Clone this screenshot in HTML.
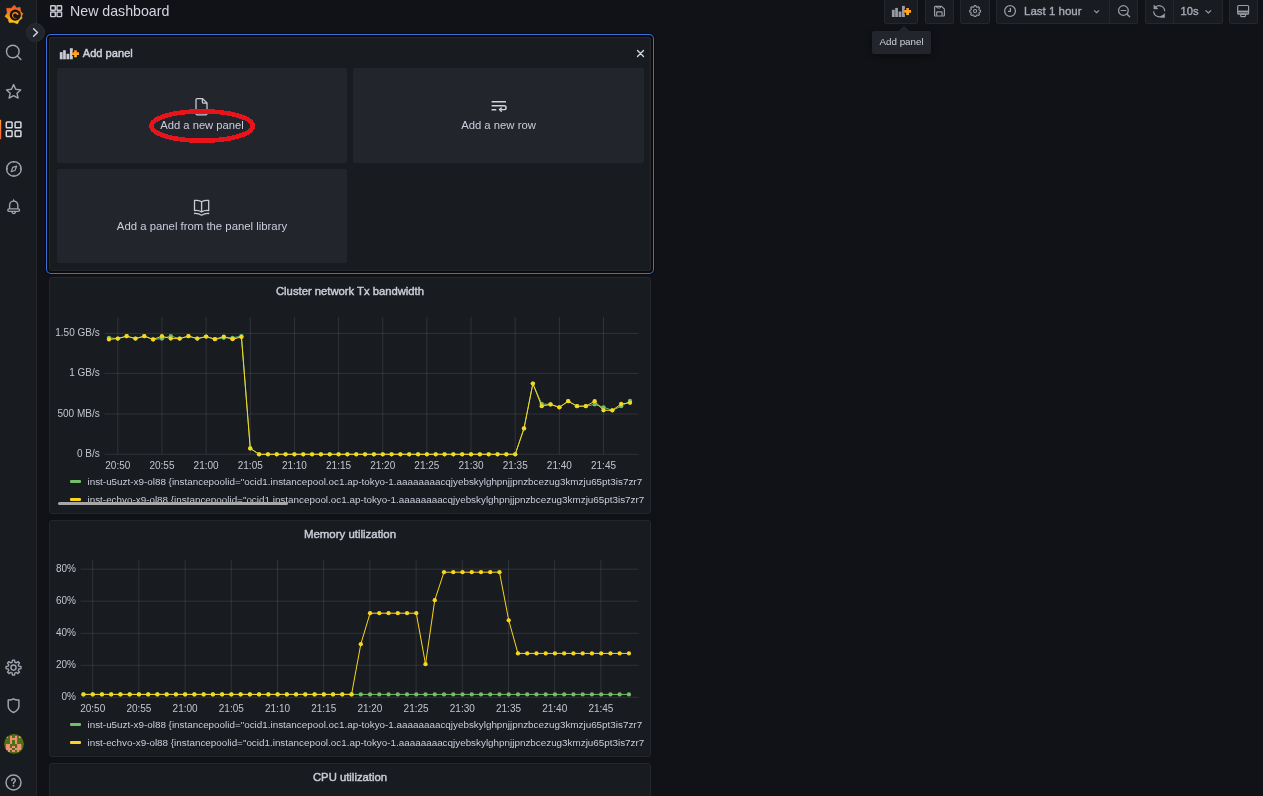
<!DOCTYPE html>
<html><head><meta charset="utf-8">
<style>
*{box-sizing:border-box;margin:0;padding:0}
html,body{width:1263px;height:796px;overflow:hidden;background:#111217;font-family:"Liberation Sans",sans-serif;color:#ccccdc}
.abs{position:absolute}
#side{position:absolute;left:0;top:0;width:37px;height:796px;background:#181b1f;border-right:1px solid #25272d}
.si{position:absolute;left:0;width:28px;height:24px}
.btn{position:absolute;top:-9px;height:33px;background:#181b1f;border:1px solid #25272c;border-radius:2px}
.panel{position:absolute;left:49px;width:602px;background:#181b1f;border:1px solid #24262c;border-radius:3px;overflow:hidden}
.ptitle{position:absolute;left:0;right:0;top:7.3px;text-align:center;font-size:11.25px;font-weight:400;color:#c9cad6;-webkit-text-stroke:0.45px #c9cad6;line-height:12px}
.card{position:absolute;background:#22252b;border-radius:2px}
.ctext{position:absolute;left:0;right:0;text-align:center;font-size:11.2px;color:#ccccdc;line-height:13px}
.yl{position:absolute;font-size:10px;line-height:12px;text-align:right;white-space:nowrap;color:#c4c4cf}
.xl{position:absolute;width:40px;font-size:10px;line-height:12px;text-align:center;white-space:nowrap;color:#c4c4cf}
.sw{position:absolute;left:70px;width:11px;height:3px;border-radius:1px}
.lg{position:absolute;left:87.5px;font-size:9.87px;line-height:12px;white-space:nowrap;color:#ccccdc;width:557px;overflow:hidden}
svg{position:absolute;left:0;top:0;overflow:visible}
</style></head>
<body><div id="root" style="position:absolute;left:0;top:0;width:1263px;height:796px;will-change:transform">
<!-- sidebar -->
<div id="side">
  <!-- logo -->
  <svg width="37" height="30" viewBox="0 0 37 30">
    <defs><linearGradient id="lg1" x1="0" y1="0" x2="0" y2="1">
      <stop offset="0" stop-color="#f05028"/><stop offset="0.45" stop-color="#f58220"/><stop offset="1" stop-color="#fcd20a"/></linearGradient></defs>
    <path fill="url(#lg1)" stroke="url(#lg1)" stroke-width="0.6" stroke-linejoin="round" d="M14.30 5.00 L16.60 8.07 L20.05 7.30 L20.56 11.25 L22.90 13.70 L21.54 15.91 L22.10 18.30 L19.33 20.29 L17.50 23.80 L13.37 22.24 L9.20 22.40 L8.11 18.86 L4.90 16.40 L7.29 12.95 L6.60 8.30 L11.27 8.36 Z"/>
    <circle cx="15.3" cy="15.1" r="5.6" fill="#14161a"/>
    <path d="M20.9 13.2 A5.5 5.5 0 0 0 16 9.5" fill="none" stroke="url(#lg1)" stroke-width="0.01"/>
    <path d="M18.65 14.71 L18.54 14.28 L18.37 13.87 L18.15 13.48 L17.89 13.13 L17.58 12.81 L17.23 12.54 L16.85 12.32 L16.45 12.14 L16.03 12.02 L15.59 11.96 L15.15 11.96 L14.72 12.01 L14.30 12.12 L13.89 12.28 L13.51 12.50 L13.17 12.76 L12.86 13.06 L12.59 13.40 L12.37 13.77 L12.20 14.17 L12.08 14.59 L12.02 15.01 L12.02 15.44 L12.07 15.87 L12.18 16.28 L12.34 16.68 L12.55 17.05 L12.80 17.40 L13.10 17.70 L13.44 17.96 L13.80 18.18 L14.19 18.34 L14.60 18.46 L15.02 18.52 L15.44 18.52 L15.86 18.47 L16.27 18.37 L16.66 18.21 L17.02 18.00 L17.36 17.75 L17.29 17.67 L16.93 17.86 L16.56 18.00 L16.18 18.09 L15.80 18.12 L15.42 18.11 L15.06 18.05 L14.72 17.94 L14.39 17.79 L14.10 17.60 L13.84 17.39 L13.61 17.14 L13.42 16.87 L13.28 16.59 L13.17 16.29 L13.10 15.99 L13.07 15.69 L13.08 15.40 L13.13 15.11 L13.22 14.84 L13.33 14.58 L13.48 14.35 L13.65 14.14 L13.84 13.96 L14.05 13.81 L14.27 13.69 L14.51 13.60 L14.74 13.54 L14.98 13.51 L15.22 13.51 L15.45 13.54 L15.68 13.60 L15.89 13.69 L16.08 13.80 L16.26 13.93 L16.42 14.08 L16.55 14.25 L16.67 14.43 L16.76 14.62 L16.83 14.82 L16.88 15.02 Z" fill="#f58a1f"/>
  </svg>
</div>
<!-- sidebar border highlight -->
<svg width="1263" height="796" style="pointer-events:none">
  <!-- search -->
  <circle cx="12.8" cy="51.5" r="6.3" fill="none" stroke="#a2a3b0" stroke-width="1.4"/>
  <line x1="17.3" y1="56" x2="20.9" y2="59.6" stroke="#a2a3b0" stroke-width="1.4" stroke-linecap="round"/>
  <!-- star -->
  <path d="M13.6 84.6 L15.7 89.3 L20.7 89.9 L17 93.2 L18.1 98.1 L13.6 95.6 L9.1 98.1 L10.2 93.2 L6.5 89.9 L11.5 89.3 Z" fill="none" stroke="#a2a3b0" stroke-width="1.4" stroke-linejoin="round"/>
  <!-- active bar -->
  <defs><linearGradient id="lg2" x1="0" y1="0" x2="0" y2="1"><stop offset="0" stop-color="#ff9830"/><stop offset="1" stop-color="#f55f3e"/></linearGradient></defs>
  <rect x="0" y="119.8" width="1.2" height="19.4" fill="url(#lg2)"/>
  <!-- dashboards -->
  <g fill="none" stroke="#d8d9e4" stroke-width="1.5">
    <rect x="6.3" y="122" width="5.8" height="5.8" rx="0.8"/><rect x="15.1" y="122" width="5.8" height="5.8" rx="0.8"/>
    <rect x="6.3" y="130.8" width="5.8" height="5.8" rx="0.8"/><rect x="15.1" y="130.8" width="5.8" height="5.8" rx="0.8"/>
  </g>
  <!-- compass -->
  <circle cx="13.9" cy="168.9" r="7.3" fill="none" stroke="#a2a3b0" stroke-width="1.4"/>
  <path d="M16.6 166.2 L15 170.5 L11.2 171.6 L12.8 167.3 Z" fill="none" stroke="#a2a3b0" stroke-width="1.2" stroke-linejoin="round"/>
  <path d="M13.9 161.6 L13.9 163 M13.9 174.8 L13.9 176.2 M6.6 168.9 L8 168.9 M19.8 168.9 L21.2 168.9" stroke="#a2a3b0" stroke-width="1.1"/>
  <!-- bell -->
  <path d="M9.6 208.7 L9.6 205.2 A4.1 4.1 0 0 1 17.8 205.2 L17.8 208.7" fill="none" stroke="#a2a3b0" stroke-width="1.4"/>
  <rect x="7.8" y="208.9" width="11.7" height="2.5" rx="1.1" fill="none" stroke="#a2a3b0" stroke-width="1.35"/>
  <path d="M11.9 211.8 A1.8 1.8 0 0 0 15.5 211.8" fill="none" stroke="#a2a3b0" stroke-width="1.35"/>
  <path d="M12.7 201.2 L13.7 198.6 L14.7 201.2 Z" fill="#a2a3b0"/>
  <!-- cog -->
  <path d="M12.08 662.29 L12.46 660.17 L14.54 660.17 L14.92 662.29 L15.60 662.52 L16.25 662.84 L18.01 661.61 L19.49 663.09 L18.26 664.85 L18.58 665.50 L18.81 666.18 L20.93 666.56 L20.93 668.64 L18.81 669.02 L18.58 669.70 L18.26 670.35 L19.49 672.11 L18.01 673.59 L16.25 672.36 L15.60 672.68 L14.92 672.91 L14.54 675.03 L12.46 675.03 L12.08 672.91 L11.40 672.68 L10.75 672.36 L8.99 673.59 L7.51 672.11 L8.74 670.35 L8.42 669.70 L8.19 669.02 L6.07 668.64 L6.07 666.56 L8.19 666.18 L8.42 665.50 L8.74 664.85 L7.51 663.09 L8.99 661.61 L10.75 662.84 L11.40 662.52 Z" fill="none" stroke="#a2a3b0" stroke-width="1.4" stroke-linejoin="round"/>
  <circle cx="13.5" cy="667.6" r="2.6" fill="none" stroke="#a2a3b0" stroke-width="1.4"/>
  <!-- shield -->
  <path d="M13.5 698.8 Q15.8 700.2 18.9 699.9 L18.9 706.2 C18.9 709.2 16.6 711 13.5 712.5 C10.4 711 8.2 709.2 8.2 706.2 L8.2 699.9 Q11.2 700.2 13.5 698.8 Z" fill="none" stroke="#a2a3b0" stroke-width="1.45" stroke-linejoin="round"/>
  <!-- avatar -->
  <defs><clipPath id="avc"><circle cx="14" cy="743.9" r="9.9"/></clipPath></defs>
  <circle cx="14" cy="743.9" r="9.9" fill="#4f720f"/>
  <g fill="#f08b80" clip-path="url(#avc)">
    <rect x="10" y="735.9" width="2" height="8.1"/><rect x="15" y="735.9" width="2.1" height="8.1"/><rect x="10" y="738" width="7.1" height="2"/>
    <rect x="5.9" y="735.9" width="2.1" height="2.1"/><rect x="18.9" y="735.9" width="2.4" height="2.1"/>
    <rect x="5.9" y="744" width="4.1" height="6"/><rect x="8" y="750" width="2" height="2"/>
    <rect x="17.1" y="744" width="4.2" height="6"/><rect x="17.1" y="750" width="1.8" height="2"/>
    <rect x="12" y="746" width="3" height="2"/><rect x="10" y="748" width="2" height="2"/><rect x="15" y="748" width="2.1" height="2"/>
    <rect x="12" y="750" width="3" height="2"/>
  </g>
  <!-- help -->
  <circle cx="13.5" cy="782.5" r="7.5" fill="none" stroke="#a2a3b0" stroke-width="1.45"/>
  <path d="M11.8 780.4 A1.75 1.75 0 1 1 14.4 781.9 Q13.5 782.4 13.5 783.4" fill="none" stroke="#a2a3b0" stroke-width="1.5" stroke-linecap="round"/>
  <circle cx="13.5" cy="785.7" r="0.95" fill="#a2a3b0"/>
</svg>

<!-- chevron toggle -->
<div class="abs" style="left:26px;top:23px;width:19px;height:19px;border-radius:50%;background:#22252b;border:1px solid #2c2e35"></div>
<svg width="1263" height="796"><path d="M33.6 28.8 L37.5 32.5 L33.6 36.2" fill="none" stroke="#d8d9e4" stroke-width="1.4" stroke-linecap="round" stroke-linejoin="round"/></svg>

<!-- top bar -->
<svg width="1263" height="796">
  <g fill="none" stroke="#c9cad6" stroke-width="1.4">
    <rect x="50.7" y="5.7" width="4.6" height="4.6" rx="0.6"/><rect x="57" y="5.7" width="4.6" height="4.6" rx="0.6"/>
    <rect x="50.7" y="12" width="4.6" height="4.6" rx="0.6"/><rect x="57" y="12" width="4.6" height="4.6" rx="0.6"/>
  </g>
</svg>
<div class="abs" style="left:70px;top:2px;font-size:14.2px;line-height:18px;color:#d4d4e0">New dashboard</div>

<!-- toolbar buttons -->
<div class="btn" style="left:884px;width:34px"></div>
<div class="btn" style="left:925px;width:29px"></div>
<div class="btn" style="left:960px;width:30px"></div>
<div class="btn" style="left:996px;width:142px"></div>
<div class="abs" style="left:1109px;top:0;width:1px;height:23px;background:#25272c"></div>
<div class="btn" style="left:1145px;width:78px"></div>
<div class="abs" style="left:1173px;top:0;width:1px;height:23px;background:#25272c"></div>
<div class="btn" style="left:1229px;width:29px"></div>
<svg width="1263" height="796">
  <!-- add panel icon -->
  <defs><linearGradient id="plusg" x1="0" y1="0" x2="0" y2="1"><stop offset="0" stop-color="#ff8a30"/><stop offset="1" stop-color="#fbc21a"/></linearGradient></defs>
  <g transform="translate(0 0)">
  <g fill="#9a9ba7">
    <rect x="891.9" y="9.8" width="2.8" height="7.2"/><rect x="895.2" y="7.9" width="2.7" height="9.1"/>
    <rect x="898.6" y="11.5" width="2.8" height="5.5"/><rect x="902" y="5.9" width="2.9" height="11.1"/>
  </g>
  <path d="M907.6 7.9 L907.6 14.9 M904.1 11.4 L911.1 11.4" stroke="#111217" stroke-width="4"/>
  <path d="M907.6 7.9 L907.6 14.9 M904.1 11.4 L911.1 11.4" stroke="url(#plusg)" stroke-width="2.7"/>
  </g>
  <!-- save -->
  <path d="M934.6 7.2 Q934.6 6.4 935.4 6.4 L941.6 6.4 L944.4 9.2 L944.4 15.2 Q944.4 16 943.6 16 L935.4 16 Q934.6 16 934.6 15.2 Z" fill="none" stroke="#9b9ca8" stroke-width="1.2" stroke-linejoin="round"/>
  <path d="M936.6 6.6 Q936.6 8 938 8 L939.6 8 Q940.6 8 940.6 6.6" fill="none" stroke="#9b9ca8" stroke-width="1.1"/>
  <path d="M936.7 15.8 L936.7 12.6 Q936.7 11.9 937.4 11.9 L941.4 11.9 Q942.1 11.9 942.1 12.6 L942.1 15.8" fill="none" stroke="#9b9ca8" stroke-width="1.2"/>
  <!-- cog -->
  <path d="M973.91 6.97 L974.24 5.67 L975.96 5.67 L976.29 6.97 L976.75 7.13 L977.18 7.34 L978.33 6.65 L979.55 7.87 L978.86 9.02 L979.07 9.45 L979.23 9.91 L980.53 10.24 L980.53 11.96 L979.23 12.29 L979.07 12.75 L978.86 13.18 L979.55 14.33 L978.33 15.55 L977.18 14.86 L976.75 15.07 L976.29 15.23 L975.96 16.53 L974.24 16.53 L973.91 15.23 L973.45 15.07 L973.02 14.86 L971.87 15.55 L970.65 14.33 L971.34 13.18 L971.13 12.75 L970.97 12.29 L969.67 11.96 L969.67 10.24 L970.97 9.91 L971.13 9.45 L971.34 9.02 L970.65 7.87 L971.87 6.65 L973.02 7.34 L973.45 7.13 Z" fill="none" stroke="#9b9ca8" stroke-width="1.1" stroke-linejoin="round"/>
  <circle cx="975.1" cy="11.1" r="1.6" fill="none" stroke="#9b9ca8" stroke-width="1.1"/>
  <!-- clock -->
  <circle cx="1010.05" cy="11.05" r="5.4" fill="none" stroke="#9b9ca8" stroke-width="1.25"/>
  <path d="M1010.4 8 L1010.4 11.4 L1007.9 11.4" fill="none" stroke="#9b9ca8" stroke-width="1.3"/>
  <path d="M1094.2 10.4 L1096.6 12.7 L1099 10.4" fill="none" stroke="#9b9ca8" stroke-width="1.2"/>
  <!-- zoom out -->
  <circle cx="1123.4" cy="10.5" r="4.85" fill="none" stroke="#9b9ca8" stroke-width="1.25"/>
  <path d="M1121 10.5 L1125.9 10.5" fill="none" stroke="#9b9ca8" stroke-width="1.15" stroke-linecap="round"/>
  <path d="M1127.1 14.2 L1129.7 16.8" fill="none" stroke="#9b9ca8" stroke-width="1.3" stroke-linecap="round"/>
  <!-- refresh -->
  <path d="M1155.52 7.21 A5.5 5.5 0 0 1 1164.70 11.30 M1153.70 11.30 A5.5 5.5 0 0 0 1162.88 15.39" fill="none" stroke="#9b9ca8" stroke-width="1.2"/>
  <path d="M1153.9 4.9 L1153.9 8.9 L1157.9 8.9 Z M1164.6 17.6 L1164.6 13.6 L1160.6 17.6 Z" fill="#9b9ca8" stroke="#9b9ca8" stroke-width="0.5" stroke-linejoin="round"/>
  <path d="M1205.5 10.4 L1208.3 13 L1211.1 10.4" fill="none" stroke="#9b9ca8" stroke-width="1.2"/>
  <!-- tv -->
  <rect x="1237.7" y="5.5" width="10.9" height="8.7" rx="1" fill="none" stroke="#9b9ca8" stroke-width="1.2"/>
  <rect x="1237.7" y="10.6" width="10.9" height="1.6" fill="#9b9ca8"/>
  <rect x="1237.7" y="12.2" width="10.9" height="1.8" fill="#9b9ca8" opacity="0.55"/>
  <rect x="1240.7" y="14.4" width="4.8" height="2.2" rx="0.6" fill="none" stroke="#9b9ca8" stroke-width="1.1"/>
</svg>
<div class="abs" style="left:1024px;top:4px;font-size:11.5px;line-height:14px;color:#a9aab6;-webkit-text-stroke:0.35px #a9aab6">Last 1 hour</div>
<div class="abs" style="left:1180.5px;top:4px;font-size:11.2px;line-height:14px;color:#a9aab6;-webkit-text-stroke:0.35px #a9aab6">10s</div>

<!-- tooltip -->
<div class="abs" style="left:872px;top:31px;width:59px;height:23px;background:#22252b;border-radius:2px;box-shadow:0 2px 6px rgba(0,0,0,.4)"></div>
<svg width="1263" height="796"><path d="M898 31.5 L904 26 L910 31.5 Z" fill="#22252b"/></svg>
<div class="abs" style="left:879.5px;top:35.5px;font-size:9.8px;line-height:12px;color:#d0d0dc">Add panel</div>

<!-- add panel widget -->
<div class="abs" style="left:49px;top:37px;width:602px;height:234px;background:#181b1f;border:1px solid #24262c;border-radius:2px;box-shadow:0 0 0 2px #0b0b0d,0 0 0 3px #3d71d9,0 0 0 4px rgba(0,0,0,.35)"></div>
<svg width="1263" height="796">
  <g transform="translate(-832.1 42.3)">
  <g fill="#c9cad6">
    <rect x="891.9" y="9.8" width="2.8" height="7.2"/><rect x="895.2" y="7.9" width="2.7" height="9.1"/>
    <rect x="898.6" y="11.5" width="2.8" height="5.5"/><rect x="902" y="5.9" width="2.9" height="11.1"/>
  </g>
  <path d="M907.6 7.9 L907.6 14.9 M904.1 11.4 L911.1 11.4" stroke="#181b1f" stroke-width="4"/>
  <path d="M907.6 7.9 L907.6 14.9 M904.1 11.4 L911.1 11.4" stroke="url(#plusg)" stroke-width="2.7"/>
  </g>
  <path d="M637.5 50.5 L643.5 56.5 M643.5 50.5 L637.5 56.5" stroke="#d8d9e4" stroke-width="1.3" stroke-linecap="round"/>
</svg>
<div class="abs" style="left:82.8px;top:46.5px;font-size:11.1px;line-height:13px;color:#cfd0dc;-webkit-text-stroke:0.45px #cfd0dc">Add panel</div>

<div class="card" style="left:57px;top:68px;width:290px;height:95px"></div>
<div class="card" style="left:353px;top:68px;width:291px;height:95px"></div>
<div class="card" style="left:57px;top:169px;width:290px;height:94px"></div>
<svg width="1263" height="796">
  <!-- file icon -->
  <path d="M196 99.8 Q196 98.6 197.2 98.6 L202.6 98.6 L207 103 L207 113.6 Q207 114.8 205.8 114.8 L197.2 114.8 Q196 114.8 196 113.6 Z M202.4 98.8 L202.4 102 Q202.4 103.2 203.6 103.2 L206.8 103.2" fill="none" stroke="#c9cad6" stroke-width="1.3" stroke-linejoin="round"/>
  <!-- row icon -->
  <path d="M491.6 101.8 L506 101.8 M491.6 105.7 L504.1 105.7 A1.95 1.95 0 0 1 504.1 109.6 L500.2 109.6 M491.6 109.7 L496.3 109.7" fill="none" stroke="#d2d3de" stroke-width="1.45"/>
  <path d="M501.3 107.9 L499.5 109.6 L501.3 111.3" fill="none" stroke="#d2d3de" stroke-width="1.4" stroke-linecap="round" stroke-linejoin="round"/>
  <!-- book icon -->
  <path d="M194.5 200.5 L194.5 210.6 Q198.5 210 201.6 212 Q204.7 210 208.7 210.6 L208.7 200.5 Q204.7 200 201.6 201.8 Q198.5 200 194.5 200.5 Z M201.6 201.8 L201.6 212 M194 213.5 Q198 213 201.6 215.2 Q205.2 213 209.2 213.5" fill="none" stroke="#c9cad6" stroke-width="1.3" stroke-linejoin="round"/>
</svg>
<div class="ctext" style="left:57px;width:290px;top:118.5px">Add a new panel</div>
<div class="ctext" style="left:353px;width:291px;top:118.5px;font-size:11.3px">Add a new row</div>
<div class="ctext" style="left:57px;width:290px;top:219.5px;font-size:11.35px">Add a panel from the panel library</div>
<svg width="1263" height="796">
  <ellipse cx="202.1" cy="126" rx="50.7" ry="14.7" fill="none" stroke="#e8141b" stroke-width="4.6" shape-rendering="crispEdges"/>
</svg>

<!-- panel 1 -->
<div class="panel" style="top:277px;height:237px"><div class="ptitle">Cluster network Tx bandwidth</div></div>
<svg width="1263" height="796"><line x1="117.8" y1="317" x2="117.8" y2="454.3" stroke="rgba(240,250,255,0.11)" stroke-width="1"/><line x1="161.95" y1="317" x2="161.95" y2="454.3" stroke="rgba(240,250,255,0.11)" stroke-width="1"/><line x1="206.11" y1="317" x2="206.11" y2="454.3" stroke="rgba(240,250,255,0.11)" stroke-width="1"/><line x1="250.26" y1="317" x2="250.26" y2="454.3" stroke="rgba(240,250,255,0.11)" stroke-width="1"/><line x1="294.42" y1="317" x2="294.42" y2="454.3" stroke="rgba(240,250,255,0.11)" stroke-width="1"/><line x1="338.57" y1="317" x2="338.57" y2="454.3" stroke="rgba(240,250,255,0.11)" stroke-width="1"/><line x1="382.73" y1="317" x2="382.73" y2="454.3" stroke="rgba(240,250,255,0.11)" stroke-width="1"/><line x1="426.89" y1="317" x2="426.89" y2="454.3" stroke="rgba(240,250,255,0.11)" stroke-width="1"/><line x1="471.04" y1="317" x2="471.04" y2="454.3" stroke="rgba(240,250,255,0.11)" stroke-width="1"/><line x1="515.19" y1="317" x2="515.19" y2="454.3" stroke="rgba(240,250,255,0.11)" stroke-width="1"/><line x1="559.35" y1="317" x2="559.35" y2="454.3" stroke="rgba(240,250,255,0.11)" stroke-width="1"/><line x1="603.5" y1="317" x2="603.5" y2="454.3" stroke="rgba(240,250,255,0.11)" stroke-width="1"/><line x1="104.6" y1="333.4" x2="638.3" y2="333.4" stroke="rgba(240,250,255,0.11)" stroke-width="1"/><line x1="104.6" y1="373.4" x2="638.3" y2="373.4" stroke="rgba(240,250,255,0.11)" stroke-width="1"/><line x1="104.6" y1="414" x2="638.3" y2="414" stroke="rgba(240,250,255,0.11)" stroke-width="1"/><line x1="104.6" y1="454.3" x2="638.3" y2="454.3" stroke="rgba(240,250,255,0.11)" stroke-width="1"/><path d="M108.97 337.8 L117.8 338.6 L126.63 336.2 L135.46 338.6 L144.29 336.2 L153.12 339.4 L161.95 338.6 L170.79 336.2 L179.62 338.6 L188.45 336.2 L197.28 338.6 L206.11 336.6 L214.94 339.2 L223.77 337.8 L232.6 337.8 L241.43 336.2 L250.26 448.4 L259.1 454.3 L267.93 454.3 L276.76 454.3 L285.59 454.3 L294.42 454.3 L303.25 454.3 L312.08 454.3 L320.91 454.3 L329.74 454.3 L338.57 454.3 L347.41 454.3 L356.24 454.3 L365.07 454.3 L373.9 454.3 L382.73 454.3 L391.56 454.3 L400.39 454.3 L409.22 454.3 L418.05 454.3 L426.88 454.3 L435.72 454.3 L444.55 454.3 L453.38 454.3 L462.21 454.3 L471.04 454.3 L479.87 454.3 L488.7 454.3 L497.53 454.3 L506.36 454.3 L515.19 454.3 L524.03 428.4 L532.86 383.6 L541.69 404 L550.52 404.4 L559.35 407.3 L568.18 401.2 L577.01 406.2 L585.84 406.2 L594.67 404.4 L603.5 407.3 L612.34 410.3 L621.17 406.2 L630 401" fill="none" stroke="#73bf69" stroke-width="1"/><circle cx="108.97" cy="337.8" r="2.15" fill="#73bf69"/><circle cx="117.8" cy="338.6" r="2.15" fill="#73bf69"/><circle cx="126.63" cy="336.2" r="2.15" fill="#73bf69"/><circle cx="135.46" cy="338.6" r="2.15" fill="#73bf69"/><circle cx="144.29" cy="336.2" r="2.15" fill="#73bf69"/><circle cx="153.12" cy="339.4" r="2.15" fill="#73bf69"/><circle cx="161.95" cy="338.6" r="2.15" fill="#73bf69"/><circle cx="170.79" cy="336.2" r="2.15" fill="#73bf69"/><circle cx="179.62" cy="338.6" r="2.15" fill="#73bf69"/><circle cx="188.45" cy="336.2" r="2.15" fill="#73bf69"/><circle cx="197.28" cy="338.6" r="2.15" fill="#73bf69"/><circle cx="206.11" cy="336.6" r="2.15" fill="#73bf69"/><circle cx="214.94" cy="339.2" r="2.15" fill="#73bf69"/><circle cx="223.77" cy="337.8" r="2.15" fill="#73bf69"/><circle cx="232.6" cy="337.8" r="2.15" fill="#73bf69"/><circle cx="241.43" cy="336.2" r="2.15" fill="#73bf69"/><circle cx="250.26" cy="448.4" r="2.15" fill="#73bf69"/><circle cx="259.1" cy="454.3" r="2.15" fill="#73bf69"/><circle cx="267.93" cy="454.3" r="2.15" fill="#73bf69"/><circle cx="276.76" cy="454.3" r="2.15" fill="#73bf69"/><circle cx="285.59" cy="454.3" r="2.15" fill="#73bf69"/><circle cx="294.42" cy="454.3" r="2.15" fill="#73bf69"/><circle cx="303.25" cy="454.3" r="2.15" fill="#73bf69"/><circle cx="312.08" cy="454.3" r="2.15" fill="#73bf69"/><circle cx="320.91" cy="454.3" r="2.15" fill="#73bf69"/><circle cx="329.74" cy="454.3" r="2.15" fill="#73bf69"/><circle cx="338.57" cy="454.3" r="2.15" fill="#73bf69"/><circle cx="347.41" cy="454.3" r="2.15" fill="#73bf69"/><circle cx="356.24" cy="454.3" r="2.15" fill="#73bf69"/><circle cx="365.07" cy="454.3" r="2.15" fill="#73bf69"/><circle cx="373.9" cy="454.3" r="2.15" fill="#73bf69"/><circle cx="382.73" cy="454.3" r="2.15" fill="#73bf69"/><circle cx="391.56" cy="454.3" r="2.15" fill="#73bf69"/><circle cx="400.39" cy="454.3" r="2.15" fill="#73bf69"/><circle cx="409.22" cy="454.3" r="2.15" fill="#73bf69"/><circle cx="418.05" cy="454.3" r="2.15" fill="#73bf69"/><circle cx="426.88" cy="454.3" r="2.15" fill="#73bf69"/><circle cx="435.72" cy="454.3" r="2.15" fill="#73bf69"/><circle cx="444.55" cy="454.3" r="2.15" fill="#73bf69"/><circle cx="453.38" cy="454.3" r="2.15" fill="#73bf69"/><circle cx="462.21" cy="454.3" r="2.15" fill="#73bf69"/><circle cx="471.04" cy="454.3" r="2.15" fill="#73bf69"/><circle cx="479.87" cy="454.3" r="2.15" fill="#73bf69"/><circle cx="488.7" cy="454.3" r="2.15" fill="#73bf69"/><circle cx="497.53" cy="454.3" r="2.15" fill="#73bf69"/><circle cx="506.36" cy="454.3" r="2.15" fill="#73bf69"/><circle cx="515.19" cy="454.3" r="2.15" fill="#73bf69"/><circle cx="524.03" cy="428.4" r="2.15" fill="#73bf69"/><circle cx="532.86" cy="383.6" r="2.15" fill="#73bf69"/><circle cx="541.69" cy="404" r="2.15" fill="#73bf69"/><circle cx="550.52" cy="404.4" r="2.15" fill="#73bf69"/><circle cx="559.35" cy="407.3" r="2.15" fill="#73bf69"/><circle cx="568.18" cy="401.2" r="2.15" fill="#73bf69"/><circle cx="577.01" cy="406.2" r="2.15" fill="#73bf69"/><circle cx="585.84" cy="406.2" r="2.15" fill="#73bf69"/><circle cx="594.67" cy="404.4" r="2.15" fill="#73bf69"/><circle cx="603.5" cy="407.3" r="2.15" fill="#73bf69"/><circle cx="612.34" cy="410.3" r="2.15" fill="#73bf69"/><circle cx="621.17" cy="406.2" r="2.15" fill="#73bf69"/><circle cx="630" cy="401" r="2.15" fill="#73bf69"/><path d="M108.97 339.4 L117.8 338.6 L126.63 336.2 L135.46 338.6 L144.29 336.2 L153.12 339.4 L161.95 336.2 L170.79 338.6 L179.62 338.6 L188.45 336.2 L197.28 338.6 L206.11 336.6 L214.94 339.2 L223.77 336.6 L232.6 339.2 L241.43 337 L250.26 448.4 L259.1 454.3 L267.93 454.3 L276.76 454.3 L285.59 454.3 L294.42 454.3 L303.25 454.3 L312.08 454.3 L320.91 454.3 L329.74 454.3 L338.57 454.3 L347.41 454.3 L356.24 454.3 L365.07 454.3 L373.9 454.3 L382.73 454.3 L391.56 454.3 L400.39 454.3 L409.22 454.3 L418.05 454.3 L426.88 454.3 L435.72 454.3 L444.55 454.3 L453.38 454.3 L462.21 454.3 L471.04 454.3 L479.87 454.3 L488.7 454.3 L497.53 454.3 L506.36 454.3 L515.19 454.3 L524.03 428.4 L532.86 383.6 L541.69 406.2 L550.52 404.4 L559.35 407.3 L568.18 401.2 L577.01 406.2 L585.84 406.2 L594.67 401.2 L603.5 410.3 L612.34 410.3 L621.17 404 L630 402.8" fill="none" stroke="#f8d620" stroke-width="1"/><circle cx="108.97" cy="339.4" r="2.15" fill="#f8d620"/><circle cx="117.8" cy="338.6" r="2.15" fill="#f8d620"/><circle cx="126.63" cy="336.2" r="2.15" fill="#f8d620"/><circle cx="135.46" cy="338.6" r="2.15" fill="#f8d620"/><circle cx="144.29" cy="336.2" r="2.15" fill="#f8d620"/><circle cx="153.12" cy="339.4" r="2.15" fill="#f8d620"/><circle cx="161.95" cy="336.2" r="2.15" fill="#f8d620"/><circle cx="170.79" cy="338.6" r="2.15" fill="#f8d620"/><circle cx="179.62" cy="338.6" r="2.15" fill="#f8d620"/><circle cx="188.45" cy="336.2" r="2.15" fill="#f8d620"/><circle cx="197.28" cy="338.6" r="2.15" fill="#f8d620"/><circle cx="206.11" cy="336.6" r="2.15" fill="#f8d620"/><circle cx="214.94" cy="339.2" r="2.15" fill="#f8d620"/><circle cx="223.77" cy="336.6" r="2.15" fill="#f8d620"/><circle cx="232.6" cy="339.2" r="2.15" fill="#f8d620"/><circle cx="241.43" cy="337" r="2.15" fill="#f8d620"/><circle cx="250.26" cy="448.4" r="2.15" fill="#f8d620"/><circle cx="259.1" cy="454.3" r="2.15" fill="#f8d620"/><circle cx="267.93" cy="454.3" r="2.15" fill="#f8d620"/><circle cx="276.76" cy="454.3" r="2.15" fill="#f8d620"/><circle cx="285.59" cy="454.3" r="2.15" fill="#f8d620"/><circle cx="294.42" cy="454.3" r="2.15" fill="#f8d620"/><circle cx="303.25" cy="454.3" r="2.15" fill="#f8d620"/><circle cx="312.08" cy="454.3" r="2.15" fill="#f8d620"/><circle cx="320.91" cy="454.3" r="2.15" fill="#f8d620"/><circle cx="329.74" cy="454.3" r="2.15" fill="#f8d620"/><circle cx="338.57" cy="454.3" r="2.15" fill="#f8d620"/><circle cx="347.41" cy="454.3" r="2.15" fill="#f8d620"/><circle cx="356.24" cy="454.3" r="2.15" fill="#f8d620"/><circle cx="365.07" cy="454.3" r="2.15" fill="#f8d620"/><circle cx="373.9" cy="454.3" r="2.15" fill="#f8d620"/><circle cx="382.73" cy="454.3" r="2.15" fill="#f8d620"/><circle cx="391.56" cy="454.3" r="2.15" fill="#f8d620"/><circle cx="400.39" cy="454.3" r="2.15" fill="#f8d620"/><circle cx="409.22" cy="454.3" r="2.15" fill="#f8d620"/><circle cx="418.05" cy="454.3" r="2.15" fill="#f8d620"/><circle cx="426.88" cy="454.3" r="2.15" fill="#f8d620"/><circle cx="435.72" cy="454.3" r="2.15" fill="#f8d620"/><circle cx="444.55" cy="454.3" r="2.15" fill="#f8d620"/><circle cx="453.38" cy="454.3" r="2.15" fill="#f8d620"/><circle cx="462.21" cy="454.3" r="2.15" fill="#f8d620"/><circle cx="471.04" cy="454.3" r="2.15" fill="#f8d620"/><circle cx="479.87" cy="454.3" r="2.15" fill="#f8d620"/><circle cx="488.7" cy="454.3" r="2.15" fill="#f8d620"/><circle cx="497.53" cy="454.3" r="2.15" fill="#f8d620"/><circle cx="506.36" cy="454.3" r="2.15" fill="#f8d620"/><circle cx="515.19" cy="454.3" r="2.15" fill="#f8d620"/><circle cx="524.03" cy="428.4" r="2.15" fill="#f8d620"/><circle cx="532.86" cy="383.6" r="2.15" fill="#f8d620"/><circle cx="541.69" cy="406.2" r="2.15" fill="#f8d620"/><circle cx="550.52" cy="404.4" r="2.15" fill="#f8d620"/><circle cx="559.35" cy="407.3" r="2.15" fill="#f8d620"/><circle cx="568.18" cy="401.2" r="2.15" fill="#f8d620"/><circle cx="577.01" cy="406.2" r="2.15" fill="#f8d620"/><circle cx="585.84" cy="406.2" r="2.15" fill="#f8d620"/><circle cx="594.67" cy="401.2" r="2.15" fill="#f8d620"/><circle cx="603.5" cy="410.3" r="2.15" fill="#f8d620"/><circle cx="612.34" cy="410.3" r="2.15" fill="#f8d620"/><circle cx="621.17" cy="404" r="2.15" fill="#f8d620"/><circle cx="630" cy="402.8" r="2.15" fill="#f8d620"/></svg>
<div class="yl" style="right:1163.3px;top:327.4px">1.50 GB/s</div><div class="yl" style="right:1163.3px;top:366.7px">1 GB/s</div><div class="yl" style="right:1163.3px;top:408px">500 MB/s</div><div class="yl" style="right:1163.3px;top:448.3px">0 B/s</div><div class="xl" style="left:97.8px;top:460px">20:50</div><div class="xl" style="left:141.95px;top:460px">20:55</div><div class="xl" style="left:186.11px;top:460px">21:00</div><div class="xl" style="left:230.26px;top:460px">21:05</div><div class="xl" style="left:274.42px;top:460px">21:10</div><div class="xl" style="left:318.57px;top:460px">21:15</div><div class="xl" style="left:362.73px;top:460px">21:20</div><div class="xl" style="left:406.89px;top:460px">21:25</div><div class="xl" style="left:451.04px;top:460px">21:30</div><div class="xl" style="left:495.19px;top:460px">21:35</div><div class="xl" style="left:539.35px;top:460px">21:40</div><div class="xl" style="left:583.5px;top:460px">21:45</div>
<div class="sw" style="top:480.0px;background:#73bf69"></div><div class="lg" style="top:475.5px">inst-u5uzt-x9-ol88 {instancepoolid="ocid1.instancepool.oc1.ap-tokyo-1.aaaaaaaacqjyebskylghpnjjpnzbcezug3kmzju65pt3is7zr7</div><div class="sw" style="top:498.0px;background:#f8d620"></div><div class="lg" style="top:493.5px">inst-echvo-x9-ol88 {instancepoolid="ocid1.instancepool.oc1.ap-tokyo-1.aaaaaaaacqjyebskylghpnjjpnzbcezug3kmzju65pt3is7zr7</div>
<div class="abs" style="left:58px;top:501.5px;width:230px;height:3.5px;border-radius:2px;background:#a7a7a7"></div>

<!-- panel 2 -->
<div class="panel" style="top:520px;height:237px"><div class="ptitle" style="font-size:11.45px;top:6.5px">Memory utilization</div></div>
<svg width="1263" height="796"><line x1="92.7" y1="559.6" x2="92.7" y2="697.3" stroke="rgba(240,250,255,0.11)" stroke-width="1"/><line x1="138.9" y1="559.6" x2="138.9" y2="697.3" stroke="rgba(240,250,255,0.11)" stroke-width="1"/><line x1="185.1" y1="559.6" x2="185.1" y2="697.3" stroke="rgba(240,250,255,0.11)" stroke-width="1"/><line x1="231.3" y1="559.6" x2="231.3" y2="697.3" stroke="rgba(240,250,255,0.11)" stroke-width="1"/><line x1="277.5" y1="559.6" x2="277.5" y2="697.3" stroke="rgba(240,250,255,0.11)" stroke-width="1"/><line x1="323.7" y1="559.6" x2="323.7" y2="697.3" stroke="rgba(240,250,255,0.11)" stroke-width="1"/><line x1="369.9" y1="559.6" x2="369.9" y2="697.3" stroke="rgba(240,250,255,0.11)" stroke-width="1"/><line x1="416.1" y1="559.6" x2="416.1" y2="697.3" stroke="rgba(240,250,255,0.11)" stroke-width="1"/><line x1="462.3" y1="559.6" x2="462.3" y2="697.3" stroke="rgba(240,250,255,0.11)" stroke-width="1"/><line x1="508.5" y1="559.6" x2="508.5" y2="697.3" stroke="rgba(240,250,255,0.11)" stroke-width="1"/><line x1="554.7" y1="559.6" x2="554.7" y2="697.3" stroke="rgba(240,250,255,0.11)" stroke-width="1"/><line x1="600.9" y1="559.6" x2="600.9" y2="697.3" stroke="rgba(240,250,255,0.11)" stroke-width="1"/><line x1="80.6" y1="569.2" x2="638.3" y2="569.2" stroke="rgba(240,250,255,0.11)" stroke-width="1"/><line x1="80.6" y1="601.2" x2="638.3" y2="601.2" stroke="rgba(240,250,255,0.11)" stroke-width="1"/><line x1="80.6" y1="633.3" x2="638.3" y2="633.3" stroke="rgba(240,250,255,0.11)" stroke-width="1"/><line x1="80.6" y1="665.3" x2="638.3" y2="665.3" stroke="rgba(240,250,255,0.11)" stroke-width="1"/><line x1="80.6" y1="697.3" x2="638.3" y2="697.3" stroke="rgba(240,250,255,0.11)" stroke-width="1"/><path d="M83.45 694.4 L92.7 694.4 L101.95 694.4 L111.19 694.4 L120.44 694.4 L129.68 694.4 L138.93 694.4 L148.17 694.4 L157.41 694.4 L166.66 694.4 L175.91 694.4 L185.15 694.4 L194.39 694.4 L203.64 694.4 L212.88 694.4 L222.13 694.4 L231.38 694.4 L240.62 694.4 L249.87 694.4 L259.11 694.4 L268.35 694.4 L277.6 694.4 L286.84 694.4 L296.09 694.4 L305.33 694.4 L314.58 694.4 L323.82 694.4 L333.07 694.4 L342.31 694.4 L351.56 694.4 L360.8 694.4 L370.05 694.4 L379.29 694.4 L388.54 694.4 L397.78 694.4 L407.03 694.4 L416.27 694.4 L425.52 694.4 L434.76 694.4 L444.01 694.4 L453.25 694.4 L462.5 694.4 L471.74 694.4 L480.99 694.4 L490.23 694.4 L499.48 694.4 L508.72 694.4 L517.97 694.4 L527.22 694.4 L536.46 694.4 L545.7 694.4 L554.95 694.4 L564.19 694.4 L573.44 694.4 L582.68 694.4 L591.93 694.4 L601.17 694.4 L610.42 694.4 L619.66 694.4 L628.91 694.4" fill="none" stroke="#73bf69" stroke-width="1"/><circle cx="83.45" cy="694.4" r="2.15" fill="#73bf69"/><circle cx="92.7" cy="694.4" r="2.15" fill="#73bf69"/><circle cx="101.95" cy="694.4" r="2.15" fill="#73bf69"/><circle cx="111.19" cy="694.4" r="2.15" fill="#73bf69"/><circle cx="120.44" cy="694.4" r="2.15" fill="#73bf69"/><circle cx="129.68" cy="694.4" r="2.15" fill="#73bf69"/><circle cx="138.93" cy="694.4" r="2.15" fill="#73bf69"/><circle cx="148.17" cy="694.4" r="2.15" fill="#73bf69"/><circle cx="157.41" cy="694.4" r="2.15" fill="#73bf69"/><circle cx="166.66" cy="694.4" r="2.15" fill="#73bf69"/><circle cx="175.91" cy="694.4" r="2.15" fill="#73bf69"/><circle cx="185.15" cy="694.4" r="2.15" fill="#73bf69"/><circle cx="194.39" cy="694.4" r="2.15" fill="#73bf69"/><circle cx="203.64" cy="694.4" r="2.15" fill="#73bf69"/><circle cx="212.88" cy="694.4" r="2.15" fill="#73bf69"/><circle cx="222.13" cy="694.4" r="2.15" fill="#73bf69"/><circle cx="231.38" cy="694.4" r="2.15" fill="#73bf69"/><circle cx="240.62" cy="694.4" r="2.15" fill="#73bf69"/><circle cx="249.87" cy="694.4" r="2.15" fill="#73bf69"/><circle cx="259.11" cy="694.4" r="2.15" fill="#73bf69"/><circle cx="268.35" cy="694.4" r="2.15" fill="#73bf69"/><circle cx="277.6" cy="694.4" r="2.15" fill="#73bf69"/><circle cx="286.84" cy="694.4" r="2.15" fill="#73bf69"/><circle cx="296.09" cy="694.4" r="2.15" fill="#73bf69"/><circle cx="305.33" cy="694.4" r="2.15" fill="#73bf69"/><circle cx="314.58" cy="694.4" r="2.15" fill="#73bf69"/><circle cx="323.82" cy="694.4" r="2.15" fill="#73bf69"/><circle cx="333.07" cy="694.4" r="2.15" fill="#73bf69"/><circle cx="342.31" cy="694.4" r="2.15" fill="#73bf69"/><circle cx="351.56" cy="694.4" r="2.15" fill="#73bf69"/><circle cx="360.8" cy="694.4" r="2.15" fill="#73bf69"/><circle cx="370.05" cy="694.4" r="2.15" fill="#73bf69"/><circle cx="379.29" cy="694.4" r="2.15" fill="#73bf69"/><circle cx="388.54" cy="694.4" r="2.15" fill="#73bf69"/><circle cx="397.78" cy="694.4" r="2.15" fill="#73bf69"/><circle cx="407.03" cy="694.4" r="2.15" fill="#73bf69"/><circle cx="416.27" cy="694.4" r="2.15" fill="#73bf69"/><circle cx="425.52" cy="694.4" r="2.15" fill="#73bf69"/><circle cx="434.76" cy="694.4" r="2.15" fill="#73bf69"/><circle cx="444.01" cy="694.4" r="2.15" fill="#73bf69"/><circle cx="453.25" cy="694.4" r="2.15" fill="#73bf69"/><circle cx="462.5" cy="694.4" r="2.15" fill="#73bf69"/><circle cx="471.74" cy="694.4" r="2.15" fill="#73bf69"/><circle cx="480.99" cy="694.4" r="2.15" fill="#73bf69"/><circle cx="490.23" cy="694.4" r="2.15" fill="#73bf69"/><circle cx="499.48" cy="694.4" r="2.15" fill="#73bf69"/><circle cx="508.72" cy="694.4" r="2.15" fill="#73bf69"/><circle cx="517.97" cy="694.4" r="2.15" fill="#73bf69"/><circle cx="527.22" cy="694.4" r="2.15" fill="#73bf69"/><circle cx="536.46" cy="694.4" r="2.15" fill="#73bf69"/><circle cx="545.7" cy="694.4" r="2.15" fill="#73bf69"/><circle cx="554.95" cy="694.4" r="2.15" fill="#73bf69"/><circle cx="564.19" cy="694.4" r="2.15" fill="#73bf69"/><circle cx="573.44" cy="694.4" r="2.15" fill="#73bf69"/><circle cx="582.68" cy="694.4" r="2.15" fill="#73bf69"/><circle cx="591.93" cy="694.4" r="2.15" fill="#73bf69"/><circle cx="601.17" cy="694.4" r="2.15" fill="#73bf69"/><circle cx="610.42" cy="694.4" r="2.15" fill="#73bf69"/><circle cx="619.66" cy="694.4" r="2.15" fill="#73bf69"/><circle cx="628.91" cy="694.4" r="2.15" fill="#73bf69"/><path d="M83.45 694.4 L92.7 694.4 L101.95 694.4 L111.19 694.4 L120.44 694.4 L129.68 694.4 L138.93 694.4 L148.17 694.4 L157.41 694.4 L166.66 694.4 L175.91 694.4 L185.15 694.4 L194.39 694.4 L203.64 694.4 L212.88 694.4 L222.13 694.4 L231.38 694.4 L240.62 694.4 L249.87 694.4 L259.11 694.4 L268.35 694.4 L277.6 694.4 L286.84 694.4 L296.09 694.4 L305.33 694.4 L314.58 694.4 L323.82 694.4 L333.07 694.4 L342.31 694.4 L351.56 694.4 L360.8 644.2 L370.05 613.2 L379.29 613.2 L388.54 613.2 L397.78 613.2 L407.03 613.2 L416.27 613.2 L425.52 664.2 L434.76 600.2 L444.01 572.2 L453.25 572.2 L462.5 572.2 L471.74 572.2 L480.99 572.2 L490.23 572.2 L499.48 572.2 L508.72 620.3 L517.97 653.4 L527.22 653.4 L536.46 653.4 L545.7 653.4 L554.95 653.4 L564.19 653.4 L573.44 653.4 L582.68 653.4 L591.93 653.4 L601.17 653.4 L610.42 653.4 L619.66 653.4 L628.91 653.4" fill="none" stroke="#f8d620" stroke-width="1"/><circle cx="83.45" cy="694.4" r="2.15" fill="#f8d620"/><circle cx="92.7" cy="694.4" r="2.15" fill="#f8d620"/><circle cx="101.95" cy="694.4" r="2.15" fill="#f8d620"/><circle cx="111.19" cy="694.4" r="2.15" fill="#f8d620"/><circle cx="120.44" cy="694.4" r="2.15" fill="#f8d620"/><circle cx="129.68" cy="694.4" r="2.15" fill="#f8d620"/><circle cx="138.93" cy="694.4" r="2.15" fill="#f8d620"/><circle cx="148.17" cy="694.4" r="2.15" fill="#f8d620"/><circle cx="157.41" cy="694.4" r="2.15" fill="#f8d620"/><circle cx="166.66" cy="694.4" r="2.15" fill="#f8d620"/><circle cx="175.91" cy="694.4" r="2.15" fill="#f8d620"/><circle cx="185.15" cy="694.4" r="2.15" fill="#f8d620"/><circle cx="194.39" cy="694.4" r="2.15" fill="#f8d620"/><circle cx="203.64" cy="694.4" r="2.15" fill="#f8d620"/><circle cx="212.88" cy="694.4" r="2.15" fill="#f8d620"/><circle cx="222.13" cy="694.4" r="2.15" fill="#f8d620"/><circle cx="231.38" cy="694.4" r="2.15" fill="#f8d620"/><circle cx="240.62" cy="694.4" r="2.15" fill="#f8d620"/><circle cx="249.87" cy="694.4" r="2.15" fill="#f8d620"/><circle cx="259.11" cy="694.4" r="2.15" fill="#f8d620"/><circle cx="268.35" cy="694.4" r="2.15" fill="#f8d620"/><circle cx="277.6" cy="694.4" r="2.15" fill="#f8d620"/><circle cx="286.84" cy="694.4" r="2.15" fill="#f8d620"/><circle cx="296.09" cy="694.4" r="2.15" fill="#f8d620"/><circle cx="305.33" cy="694.4" r="2.15" fill="#f8d620"/><circle cx="314.58" cy="694.4" r="2.15" fill="#f8d620"/><circle cx="323.82" cy="694.4" r="2.15" fill="#f8d620"/><circle cx="333.07" cy="694.4" r="2.15" fill="#f8d620"/><circle cx="342.31" cy="694.4" r="2.15" fill="#f8d620"/><circle cx="351.56" cy="694.4" r="2.15" fill="#f8d620"/><circle cx="360.8" cy="644.2" r="2.15" fill="#f8d620"/><circle cx="370.05" cy="613.2" r="2.15" fill="#f8d620"/><circle cx="379.29" cy="613.2" r="2.15" fill="#f8d620"/><circle cx="388.54" cy="613.2" r="2.15" fill="#f8d620"/><circle cx="397.78" cy="613.2" r="2.15" fill="#f8d620"/><circle cx="407.03" cy="613.2" r="2.15" fill="#f8d620"/><circle cx="416.27" cy="613.2" r="2.15" fill="#f8d620"/><circle cx="425.52" cy="664.2" r="2.15" fill="#f8d620"/><circle cx="434.76" cy="600.2" r="2.15" fill="#f8d620"/><circle cx="444.01" cy="572.2" r="2.15" fill="#f8d620"/><circle cx="453.25" cy="572.2" r="2.15" fill="#f8d620"/><circle cx="462.5" cy="572.2" r="2.15" fill="#f8d620"/><circle cx="471.74" cy="572.2" r="2.15" fill="#f8d620"/><circle cx="480.99" cy="572.2" r="2.15" fill="#f8d620"/><circle cx="490.23" cy="572.2" r="2.15" fill="#f8d620"/><circle cx="499.48" cy="572.2" r="2.15" fill="#f8d620"/><circle cx="508.72" cy="620.3" r="2.15" fill="#f8d620"/><circle cx="517.97" cy="653.4" r="2.15" fill="#f8d620"/><circle cx="527.22" cy="653.4" r="2.15" fill="#f8d620"/><circle cx="536.46" cy="653.4" r="2.15" fill="#f8d620"/><circle cx="545.7" cy="653.4" r="2.15" fill="#f8d620"/><circle cx="554.95" cy="653.4" r="2.15" fill="#f8d620"/><circle cx="564.19" cy="653.4" r="2.15" fill="#f8d620"/><circle cx="573.44" cy="653.4" r="2.15" fill="#f8d620"/><circle cx="582.68" cy="653.4" r="2.15" fill="#f8d620"/><circle cx="591.93" cy="653.4" r="2.15" fill="#f8d620"/><circle cx="601.17" cy="653.4" r="2.15" fill="#f8d620"/><circle cx="610.42" cy="653.4" r="2.15" fill="#f8d620"/><circle cx="619.66" cy="653.4" r="2.15" fill="#f8d620"/><circle cx="628.91" cy="653.4" r="2.15" fill="#f8d620"/></svg>
<div class="yl" style="right:1187px;top:563.2px">80%</div><div class="yl" style="right:1187px;top:595.2px">60%</div><div class="yl" style="right:1187px;top:627.3px">40%</div><div class="yl" style="right:1187px;top:659.3px">20%</div><div class="yl" style="right:1187px;top:691.3px">0%</div><div class="xl" style="left:72.7px;top:703px">20:50</div><div class="xl" style="left:118.9px;top:703px">20:55</div><div class="xl" style="left:165.1px;top:703px">21:00</div><div class="xl" style="left:211.3px;top:703px">21:05</div><div class="xl" style="left:257.5px;top:703px">21:10</div><div class="xl" style="left:303.7px;top:703px">21:15</div><div class="xl" style="left:349.9px;top:703px">21:20</div><div class="xl" style="left:396.1px;top:703px">21:25</div><div class="xl" style="left:442.3px;top:703px">21:30</div><div class="xl" style="left:488.5px;top:703px">21:35</div><div class="xl" style="left:534.7px;top:703px">21:40</div><div class="xl" style="left:580.9px;top:703px">21:45</div>
<div class="sw" style="top:723.0px;background:#73bf69"></div><div class="lg" style="top:718.5px">inst-u5uzt-x9-ol88 {instancepoolid="ocid1.instancepool.oc1.ap-tokyo-1.aaaaaaaacqjyebskylghpnjjpnzbcezug3kmzju65pt3is7zr7</div><div class="sw" style="top:741.0px;background:#f8d620"></div><div class="lg" style="top:736.5px">inst-echvo-x9-ol88 {instancepoolid="ocid1.instancepool.oc1.ap-tokyo-1.aaaaaaaacqjyebskylghpnjjpnzbcezug3kmzju65pt3is7zr7</div>

<!-- panel 3 -->
<div class="panel" style="top:763px;height:100px"><div class="ptitle" style="font-size:11.3px;top:6.5px">CPU utilization</div></div>
</div></body></html>
